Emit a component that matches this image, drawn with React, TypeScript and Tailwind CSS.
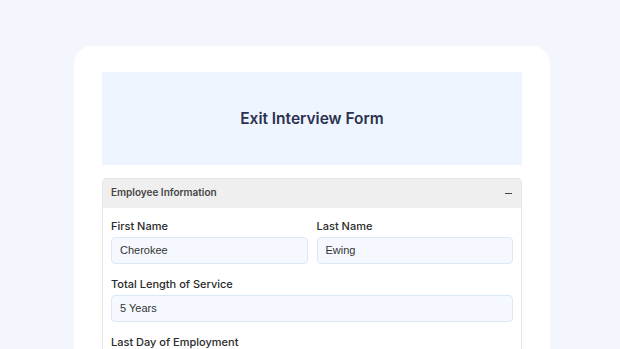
export default function App() {
  return (
    <div className="w-[620px] h-[349px] overflow-hidden bg-[#f3f6fc] pt-[46px] pl-[74px] font-['Inter',sans-serif]">
      <div className="w-[476px] h-[400px] bg-white rounded-[18px] px-[28px] pt-[26px]">
        {/* Title banner */}
        <div className="h-[93px] bg-[#eff5ff] flex items-center justify-center">
          <h1 className="text-[15.5px] font-semibold text-[#2b3150]">Exit Interview Form</h1>
        </div>

        {/* Section */}
        <div className="mt-[13px] border border-[#e6e6e6] rounded-t-[4px]">
          <div className="h-[29px] bg-[#efefef] flex items-center justify-between pl-[8px] pr-[8px] pb-[2px]">
            <span className="text-[10px] font-semibold text-[#454545]">Employee Information</span>
            <span className="w-[7px] h-[1.5px] bg-[#444] mr-[1px] mt-[2px]" />
          </div>
          <div className="px-[8px] pt-[11px] pb-4">
            <div className="grid grid-cols-2 gap-x-[9px]">
              <Field label="First Name" value="Cherokee" />
              <Field label="Last Name" value="Ewing" />
            </div>
            <div className="mt-[13px]">
              <Field label="Total Length of Service" value="5 Years" />
            </div>
            <div className="mt-[13px]">
              <Field label="Last Day of Employment" value="" />
            </div>
          </div>
        </div>
      </div>
    </div>
  );
}

function Field({ label, value }: { label: string; value: string }) {
  return (
    <div>
      <div className="text-[11px] font-medium text-[#2a2a2a] leading-[14px]">{label}</div>
      <div className="mt-[4px] h-[27px] bg-[#f5f9ff] border border-[#dde8f6] rounded-[4px] flex items-center px-[8px]">
        <span className="text-[11px] text-[#333] font-['Liberation_Sans',sans-serif]">{value}</span>
      </div>
    </div>
  );
}
